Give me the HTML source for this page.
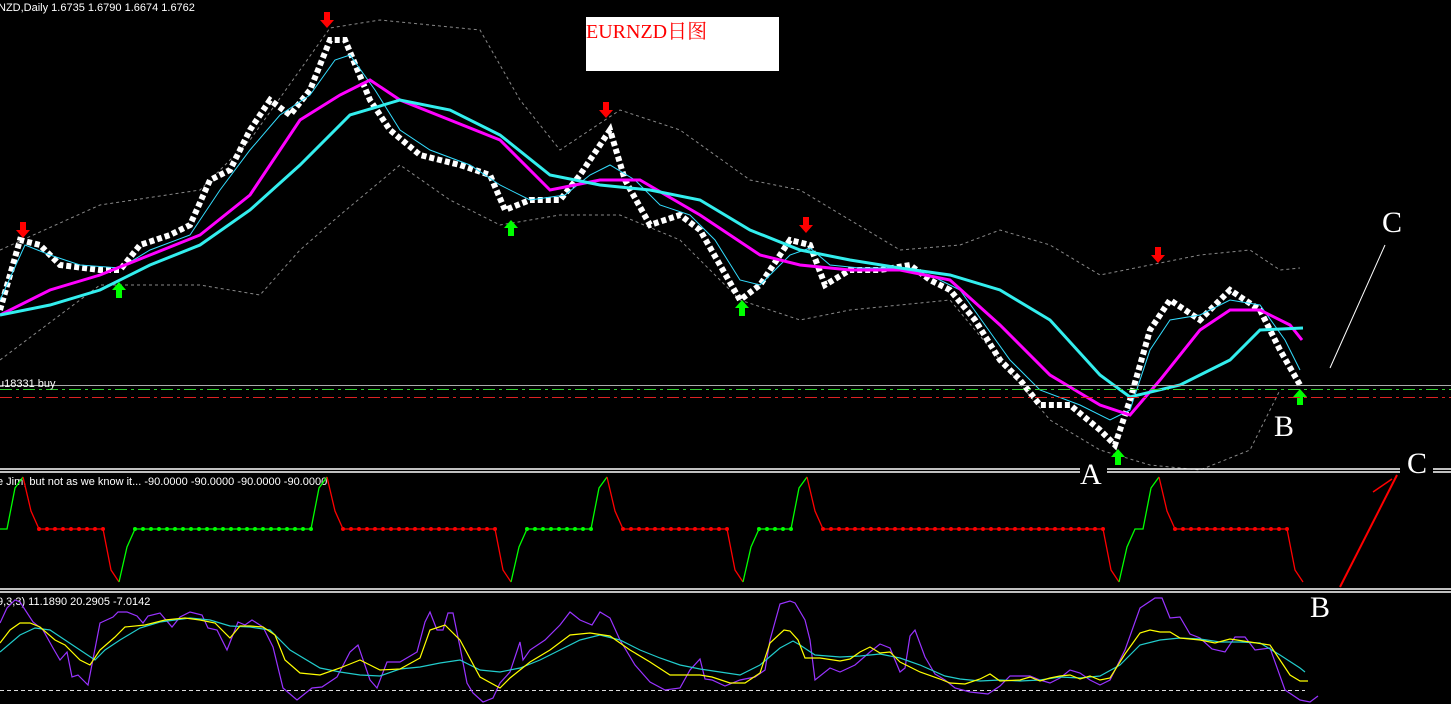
<!DOCTYPE html>
<html><head><meta charset="utf-8"><style>
html,body{margin:0;padding:0;background:#000;width:1451px;height:704px;overflow:hidden}
svg{display:block}
.s{font-family:"Liberation Sans","Noto Sans CJK SC",sans-serif}
.f{font-family:"Liberation Serif","Noto Serif CJK SC",serif}
</style></head><body>
<svg width="1451" height="704" viewBox="0 0 1451 704" xmlns="http://www.w3.org/2000/svg">
<rect width="1451" height="704" fill="#000"/>
<text class="s" x="-2" y="11" fill="#fff" font-size="11">NZD,Daily  1.6735 1.6790 1.6674 1.6762</text>
<polyline fill="none" stroke="#888" stroke-dasharray="3,3" points="0,250 100,205 200,190 250,140 300,70 330,28 380,20 480,30 520,100 560,150 620,110 680,130 750,180 800,190 850,220 900,250 960,245 1000,230 1050,245 1100,275 1150,265 1200,255 1250,250 1280,270 1300,268"/>
<polyline fill="none" stroke="#888" stroke-dasharray="3,3" points="0,360 100,285 200,285 260,295 300,250 340,215 400,165 450,200 500,225 560,215 620,215 680,240 740,300 800,320 850,310 950,300 1000,360 1050,420 1100,450 1150,465 1200,470 1250,450 1280,390"/>
<polyline fill="none" stroke="#fff" stroke-width="6" stroke-dasharray="5,3" points="0,310 20,240 40,245 60,265 100,270 120,270 140,245 170,235 190,225 210,180 230,170 250,130 270,100 290,115 310,90 330,40 345,40 370,100 390,130 420,155 460,165 490,175 505,210 530,200 560,200 580,175 610,130 625,180 650,225 680,215 700,230 720,265 740,300 760,285 790,240 810,245 825,285 850,270 880,270 910,265 930,280 950,290 975,320 1000,360 1020,380 1040,405 1070,405 1100,430 1115,445 1130,400 1150,330 1170,300 1200,320 1230,290 1260,310 1280,350 1300,385"/>
<polyline fill="none" stroke="#3df" stroke-width="1" points="0,300 25,245 50,255 80,265 120,268 150,250 190,235 220,190 250,150 280,115 310,95 335,60 350,55 375,90 400,130 430,150 470,165 500,185 530,200 565,195 590,175 610,165 635,180 660,205 690,215 715,240 740,280 760,285 790,255 810,248 830,265 860,268 900,268 930,275 960,290 985,325 1010,360 1040,390 1080,405 1110,420 1130,410 1150,350 1170,320 1200,315 1230,300 1260,305 1285,340 1300,370"/>
<polyline fill="none" stroke="#f0f" stroke-width="3" points="0,315 50,290 100,275 150,255 200,235 250,195 300,120 340,95 370,80 400,100 450,120 500,140 550,190 600,180 640,180 700,215 760,255 800,265 850,270 900,270 950,280 1000,325 1050,375 1100,405 1130,415 1160,380 1200,330 1230,310 1260,310 1290,325 1302,340"/>
<polyline fill="none" stroke="#3ee" stroke-width="3" points="0,315 50,305 100,290 150,265 200,245 250,210 300,165 350,115 400,100 450,110 500,135 550,175 600,185 650,190 700,200 750,230 800,250 850,260 900,268 950,275 1000,290 1050,320 1100,375 1130,397 1180,385 1230,360 1260,330 1303,328"/>
<g fill="#f00">
<path d="M20,222h6v8h4l-7,8-7-8h4z"/><path d="M324,12h6v8h4l-7,8-7-8h4z"/><path d="M603,102h6v8h4l-7,8-7-8h4z"/><path d="M803,217h6v8h4l-7,8-7-8h4z"/><path d="M1155,247h6v8h4l-7,8-7-8h4z"/>
</g>
<g fill="#0f0">
<path d="M116,298h6v-8h4l-7,-8-7,8h4z"/><path d="M508,236h6v-8h4l-7,-8-7,8h4z"/><path d="M739,316h6v-8h4l-7,-8-7,8h4z"/><path d="M1115,465h6v-8h4l-7,-8-7,8h4z"/><path d="M1297,405h6v-8h4l-7,-8-7,8h4z"/>
</g>
<line x1="0" y1="385.5" x2="1451" y2="385.5" stroke="#aaa"/>
<line x1="0" y1="389.5" x2="1451" y2="389.5" stroke="#3c3" stroke-dasharray="12,4,3,4"/>
<line x1="0" y1="397.5" x2="1451" y2="397.5" stroke="#d22" stroke-dasharray="12,4,3,4"/>
<text class="s" x="-2" y="387" fill="#fff" font-size="11">u18331 buy</text>
<rect x="586" y="17" width="193" height="54" fill="#fff"/>
<text class="f" x="586" y="38" fill="#f00" font-size="20">EURNZD日图</text>
<g stroke="#fff" stroke-width="1.5">
<line x1="0" y1="469" x2="1080" y2="469"/><line x1="0" y1="472" x2="1080" y2="472"/>
<line x1="1107" y1="469" x2="1400" y2="469"/><line x1="1107" y1="472" x2="1400" y2="472"/>
<line x1="1433" y1="469" x2="1451" y2="469"/><line x1="1433" y1="472" x2="1451" y2="472"/>
<line x1="0" y1="589" x2="1451" y2="589"/><line x1="0" y1="592" x2="1451" y2="592"/>
</g>
<text class="s" x="-3" y="485" fill="#fff" font-size="11">e Jim, but not as we know it...  -90.0000 -90.0000 -90.0000 -90.0000</text>
<g fill="none" stroke-width="1.3">
<polyline stroke="#0f0" points="0,529 7,529 15,488 23,477"/>
<polyline stroke="#f00" points="23,477 31,511 39,529 103,529 111,570 119,582"/>
<polyline stroke="#0f0" points="119,582 127,547 135,529 311,529 319,488 327,477"/>
<polyline stroke="#f00" points="327,477 335,511 343,529 495,529 503,570 511,582"/>
<polyline stroke="#0f0" points="511,582 519,547 527,529 591,529 599,488 607,477"/>
<polyline stroke="#f00" points="607,477 615,511 623,529 727,529 735,570 743,582"/>
<polyline stroke="#0f0" points="743,582 751,547 759,529 791,529 799,488 807,477"/>
<polyline stroke="#f00" points="807,477 815,511 823,529 1103,529 1111,570 1119,582"/>
<polyline stroke="#0f0" points="1119,582 1127,547 1135,529 1143,529 1151,488 1159,477"/>
<polyline stroke="#f00" points="1159,477 1167,511 1175,529 1287,529 1295,570 1303,582"/>
</g>
<g stroke-width="4" stroke-linecap="round" stroke-dasharray="0,8">
<line x1="39" y1="529" x2="104" y2="529" stroke="#f00"/>
<line x1="135" y1="529" x2="312" y2="529" stroke="#0f0"/>
<line x1="343" y1="529" x2="496" y2="529" stroke="#f00"/>
<line x1="527" y1="529" x2="592" y2="529" stroke="#0f0"/>
<line x1="623" y1="529" x2="728" y2="529" stroke="#f00"/>
<line x1="759" y1="529" x2="792" y2="529" stroke="#0f0"/>
<line x1="823" y1="529" x2="1104" y2="529" stroke="#f00"/>
<line x1="1175" y1="529" x2="1288" y2="529" stroke="#f00"/>
</g>
<text class="s" x="-3" y="605" fill="#fff" font-size="11">9,3,3) 11.1890 20.2905 -7.0142</text>
<line x1="0" y1="690.5" x2="1305" y2="690.5" stroke="#ddd" stroke-dasharray="4,3"/>
<polyline fill="none" stroke="#93f" stroke-width="1.2" points="0,623 7,608 15,600 20,602 33,622 43,630 53,648 60,660 67,652 72,677 78,675 88,685 100,623 113,617 118,612 127,612 137,616 143,623 148,616 160,613 172,627 180,617 190,612 202,615 208,628 217,630 227,650 238,622 245,625 252,620 263,627 273,647 283,688 297,700 312,688 322,687 337,677 350,652 358,645 370,680 377,688 387,662 400,662 417,652 425,622 430,612 437,630 443,630 448,613 453,613 460,647 467,683 473,693 483,702 493,698 500,683 510,672 520,642 523,660 530,650 545,640 560,625 570,612 580,620 592,625 600,612 610,618 620,640 635,665 650,682 665,690 680,688 690,670 700,659 705,679 712,680 725,686 740,680 755,677 765,670 770,640 780,604 790,601 795,603 805,620 810,640 815,680 830,668 840,672 855,665 870,652 880,644 890,648 900,672 905,668 910,636 915,630 925,657 935,674 945,680 955,688 970,692 988,694 1000,686 1010,676 1030,676 1040,680 1050,683 1060,678 1070,670 1080,673 1090,680 1100,685 1110,680 1125,650 1140,608 1155,598 1162,598 1170,618 1180,617 1190,634 1200,638 1212,649 1225,652 1235,637 1245,637 1255,650 1270,648 1285,690 1300,700 1310,702 1318,696"/>
<polyline fill="none" stroke="#2cc" stroke-width="1.2" points="0,652 20,635 35,628 50,630 65,640 80,650 95,660 105,650 120,640 140,628 160,622 190,618 210,620 230,626 250,627 270,630 290,650 320,668 340,672 360,675 380,676 400,669 420,667 440,663 460,660 480,670 500,672 520,668 540,660 560,650 580,640 600,635 620,640 640,650 660,658 680,665 700,669 720,672 740,675 760,665 780,648 793,641 800,645 815,655 840,657 860,656 880,654 900,658 920,665 945,676 960,679 980,681 1000,680 1020,681 1040,680 1060,677 1080,678 1100,676 1120,665 1140,645 1160,640 1180,638 1200,639 1220,642 1240,642 1260,643 1280,655 1300,668 1305,672"/>
<polyline fill="none" stroke="#ff0" stroke-width="1.2" points="0,643 10,630 20,623 30,623 40,627 55,640 65,645 80,660 90,665 100,650 115,637 125,627 145,625 165,620 185,618 200,620 215,623 230,638 240,626 250,626 263,627 275,635 285,660 300,673 320,675 340,668 360,660 380,670 400,669 420,658 430,630 445,625 460,640 480,677 500,688 510,678 530,662 550,650 570,635 590,633 610,636 630,650 650,662 670,675 700,675 712,677 730,683 745,683 760,673 770,643 784,630 790,631 798,640 805,658 820,658 840,661 850,659 860,652 870,647 880,653 890,652 900,662 920,672 940,679 950,683 965,684 980,679 990,674 1000,681 1020,680 1030,677 1040,681 1050,678 1060,676 1070,675 1080,679 1090,676 1100,680 1110,678 1125,654 1140,633 1150,630 1160,632 1170,632 1180,638 1200,640 1215,643 1230,639 1250,642 1270,645 1280,660 1290,675 1300,681 1308,681"/>
<line x1="1330" y1="368" x2="1385" y2="245" stroke="#fff" stroke-width="1"/>
<polyline fill="none" stroke="#f00" stroke-width="2" points="1340,587 1397,475"/>
<polyline fill="none" stroke="#f00" stroke-width="1.5" points="1373,492 1392,479"/>
<g fill="#fff" font-size="30">
<text class="f" x="1080" y="484">A</text>
<text class="f" x="1274" y="436">B</text>
<text class="f" x="1382" y="232">C</text>
<text class="f" x="1407" y="473">C</text>
<text class="f" x="1310" y="617">B</text>
</g>
</svg>
</body></html>
